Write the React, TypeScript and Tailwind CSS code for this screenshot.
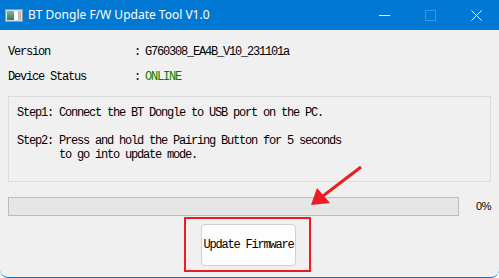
const mono = "font-['SimSun','Liberation_Mono',monospace] text-[12px] tracking-[-1.2px] leading-[14px] text-black"

const AppIcon = () => (
    <svg width="18" height="13" viewBox="0 0 18 13">
        <rect x="0.5" y="0.5" width="17" height="12" fill="#dcdcdc" stroke="#9a9a9a" />
        <defs>
            <linearGradient id="g" x1="0" y1="0" x2="0" y2="1">
                <stop offset="0" stopColor="#7fb6a4" />
                <stop offset="1" stopColor="#2f7d5a" />
            </linearGradient>
        </defs>
        <rect x="2" y="2" width="7" height="9" fill="url(#g)" />
        <rect x="9" y="2" width="4" height="9" fill="#ffffff" />
        <rect x="13" y="2" width="3" height="9" fill="#bfbfbf" />
    </svg>
)

const TitleBar = () => (
    <div className="h-[30px] bg-[#0078d4] flex items-center text-white shrink-0">
        <div className="ml-[5px] mt-[1px]"><AppIcon /></div>
        <div className="ml-[5px] font-['Noto_Sans',sans-serif] text-[12px] leading-none">BT Dongle F/W Update Tool V1.0</div>
        <div className="ml-auto flex items-center">
            <svg width="11" height="11" viewBox="0 0 11 11" className="mr-[35px]">
                <line x1="0" y1="5.5" x2="11" y2="5.5" stroke="#fff" strokeWidth="1" />
            </svg>
            <svg width="11" height="11" viewBox="0 0 11 11" className="mr-[35px]">
                <rect x="0.5" y="0.5" width="10" height="10" fill="none" stroke="#3f95dc" strokeWidth="1" />
            </svg>
            <svg width="11" height="11" viewBox="0 0 11 11" className="mr-[17px]">
                <path d="M0.5 0.5 L10.5 10.5 M10.5 0.5 L0.5 10.5" stroke="#fff" strokeWidth="1" />
            </svg>
        </div>
    </div>
)

const Row = ({ label, children }: { label: string; children: React.ReactNode }) => (
    <div className={`flex ${mono}`}>
        <div className="w-[126px]">{label}</div>
        <div className="w-[11px]">:</div>
        <div>{children}</div>
    </div>
)

export default function App() {
    return (
        <div className="relative w-[499px] h-[278px] bg-[#f0f0f0] overflow-hidden flex flex-col border-b border-[#0078d4] rounded-b-[8px]">
            <TitleBar />
            <div className="px-[8px] flex flex-col">
                <div className="mt-[15px]">
                    <Row label="Version">G760308_EA4B_V10_231101a</Row>
                </div>
                <div className="mt-[11px]">
                    <Row label="Device Status"><span className="text-[#008000]">ONLINE</span></Row>
                </div>
                <div className={`mt-[12px] h-[86px] border border-[#dcdcdc] pl-[8px] pt-[9px] whitespace-pre ${mono}`}>
                    {"Step1: Connect the BT Dongle to USB port on the PC.\n\nStep2: Press and hold the Pairing Button for 5 seconds\n       to go into update mode."}
                </div>
                <div className="mt-[15px] flex items-center">
                    <div className="w-[453px] h-[19px] bg-[#e6e6e6] border border-[#bcbcbc]" />
                    <div className="ml-[17px] font-['Liberation_Sans',sans-serif] text-[11px] tracking-[-0.5px] text-black">0%</div>
                </div>
                <div className="mt-[8px] flex">
                    <button className={`ml-[193px] w-[95px] h-[42px] bg-[#fdfdfd] border border-[#d0d0d0] rounded-[4px] ${mono}`}>Update Firmware</button>
                </div>
            </div>
            <div className="absolute left-[184px] top-[217px] w-[127px] h-[55px] border-2 border-[#ed1c24]" />
            <svg className="absolute left-0 top-0" width="499" height="278">
                <line x1="361" y1="167" x2="321" y2="197.5" stroke="#ed1c24" strokeWidth="3" />
                <polygon points="311,205 317,188 330,203" fill="#ed1c24" />
            </svg>
        </div>
    )
}
